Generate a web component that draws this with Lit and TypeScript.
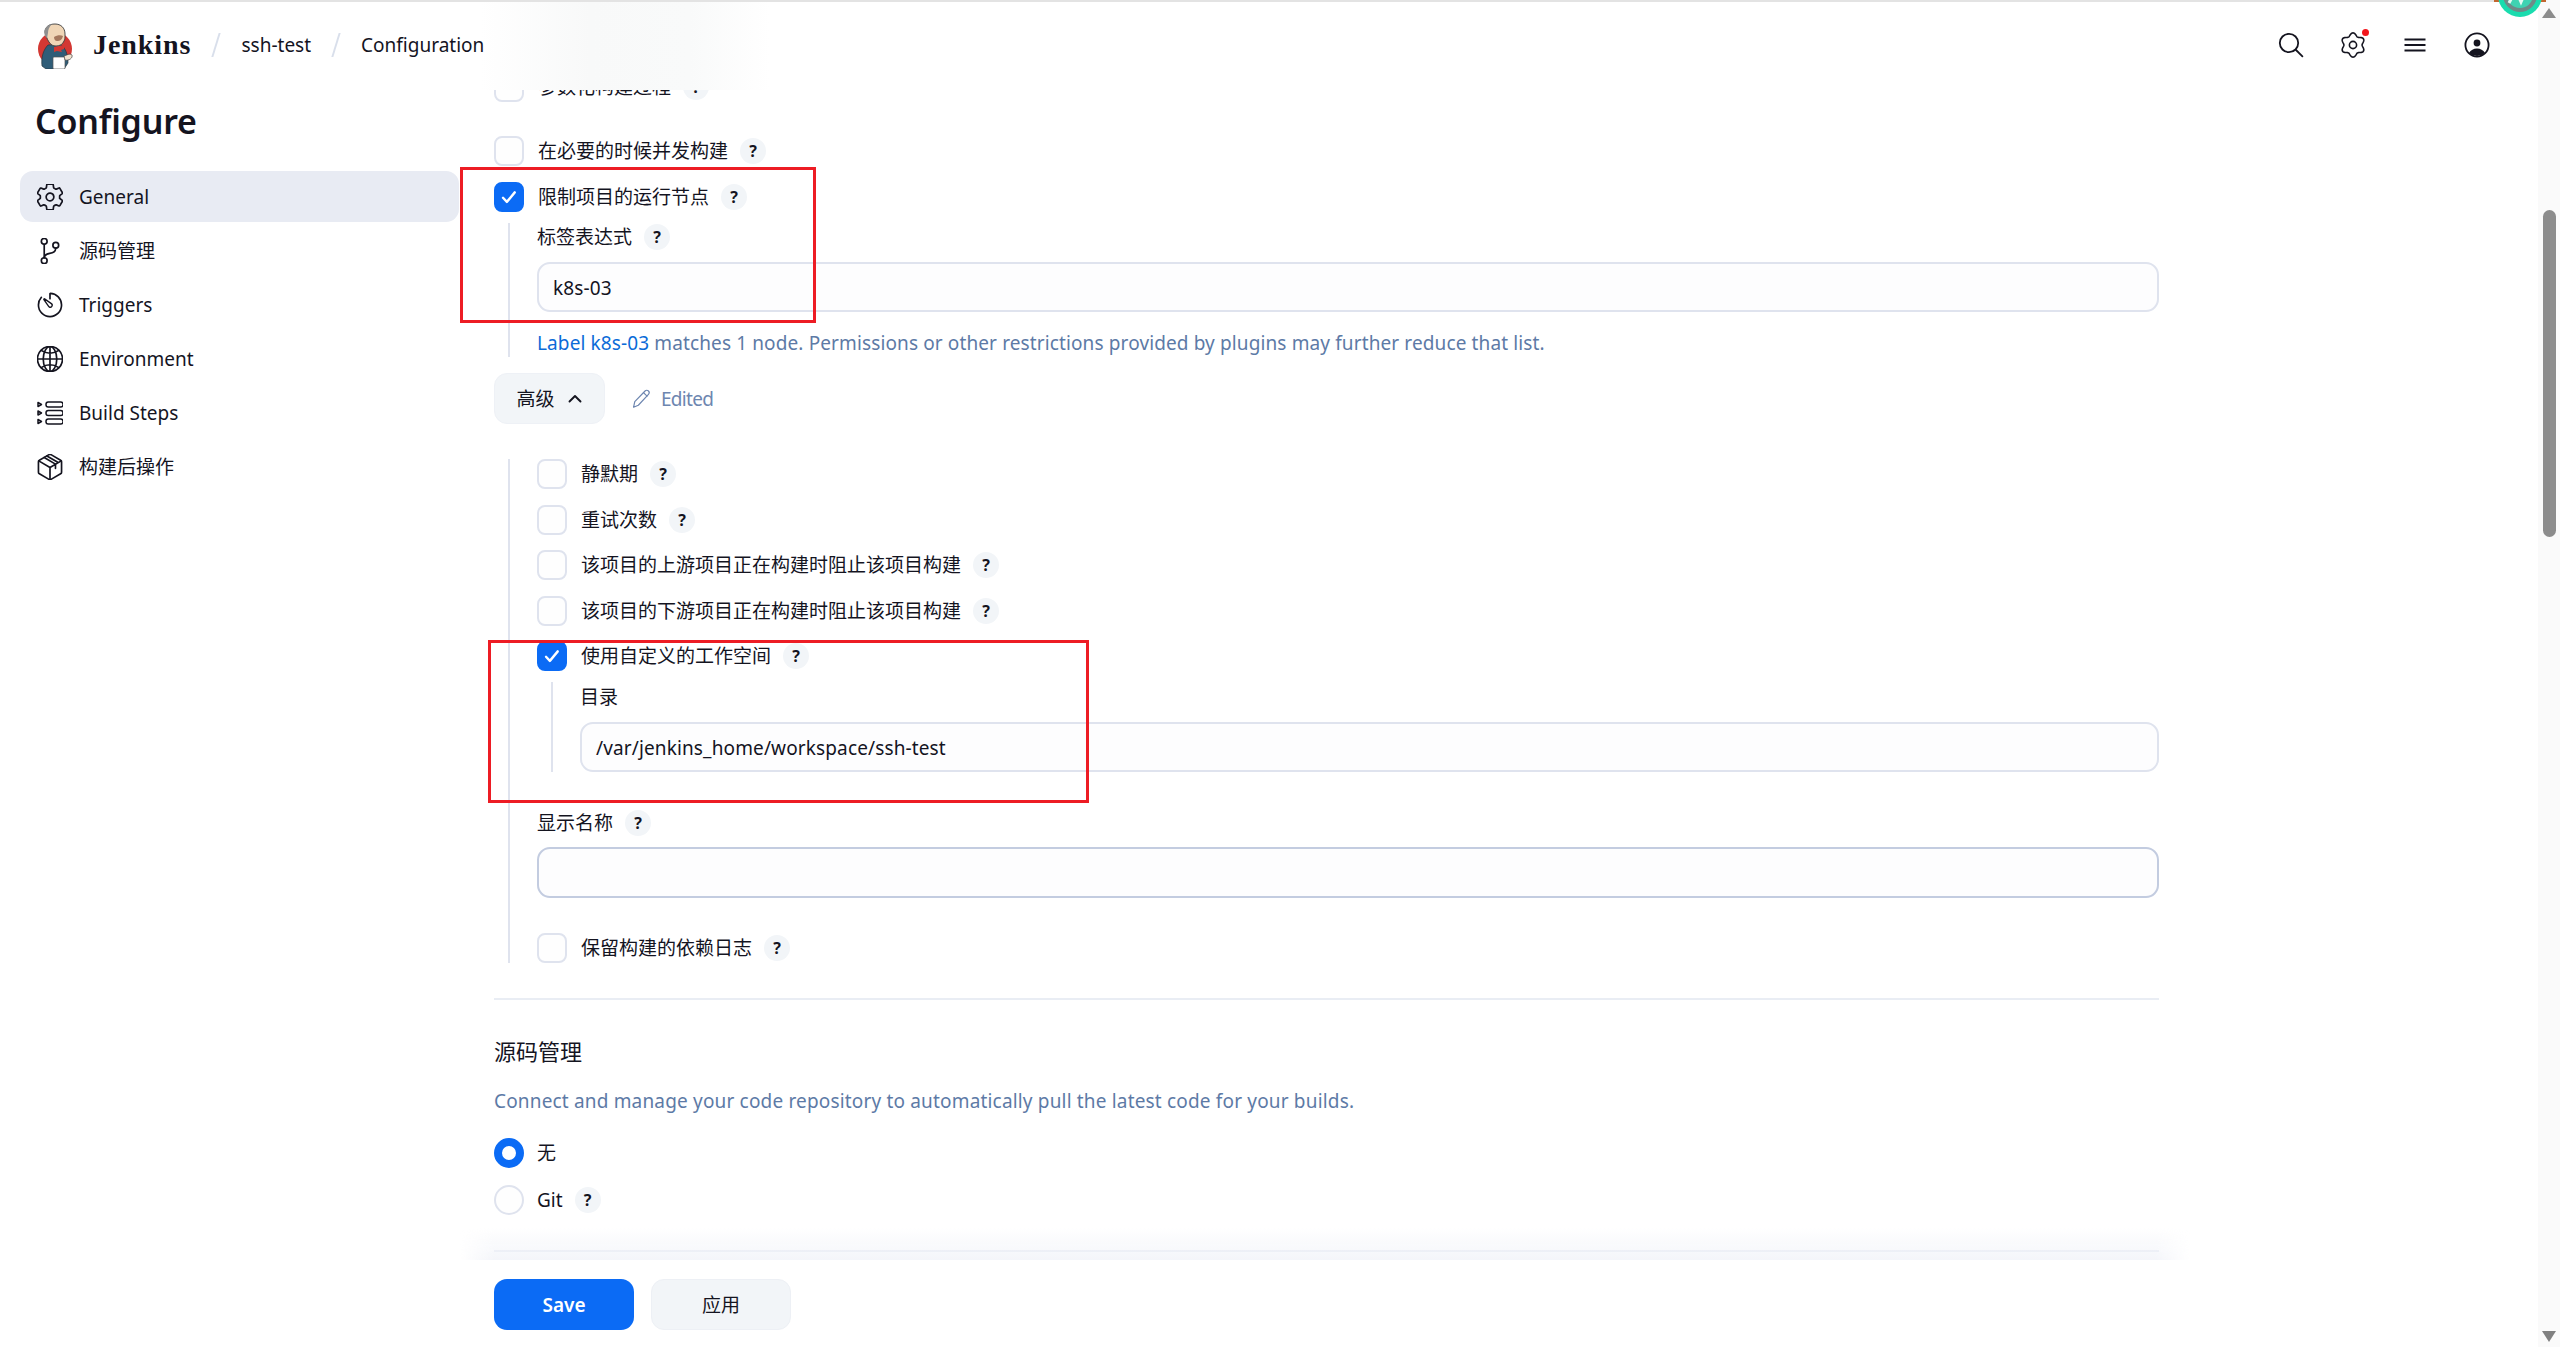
import { LitElement, html, css, svg } from "lit";
import { customElement } from "lit/decorators.js";

const flower = (cx: number, cy: number, r: number, amp: number, lobes: number, rot: number) => {
  const pts: string[] = [];
  for (let i = 0; i < 120; i++) {
    const t = (i / 120) * Math.PI * 2;
    const rr = r + amp * Math.cos(lobes * (t - rot));
    pts.push(`${(cx + rr * Math.cos(t)).toFixed(2)} ${(cy + rr * Math.sin(t)).toFixed(2)}`);
  }
  return "M" + pts.join("L") + "Z";
};

const ion = (body: unknown) => html`<svg class="ic" viewBox="40 40 432 432" fill="none" stroke="currentColor" stroke-width="28" stroke-linecap="round" stroke-linejoin="round">${body}</svg>`;

const gearPath = "M262.29 192.31a64 64 0 1057.4 57.4 64.13 64.13 0 00-57.4-57.4zM416.39 256a154.34 154.34 0 01-1.53 20.79l45.21 35.46a10.81 10.81 0 012.45 13.75l-42.77 74a10.81 10.81 0 01-13.14 4.59l-44.9-18.08a16.11 16.11 0 00-15.17 1.75A164.48 164.48 0 01325 400.8a15.94 15.94 0 00-8.82 12.14l-6.73 47.89a11.08 11.08 0 01-10.68 9.17h-85.54a11.11 11.11 0 01-10.69-8.87l-6.72-47.82a16.07 16.07 0 00-9-12.22 155.3 155.3 0 01-21.46-12.57 16 16 0 00-15.11-1.71l-44.89 18.07a10.81 10.81 0 01-13.14-4.58l-42.77-74a10.8 10.8 0 012.45-13.75l38.21-30a16.05 16.05 0 006-14.08c-.36-4.17-.58-8.33-.58-12.5s.21-8.27.58-12.35a16 16 0 00-6.07-13.94l-38.19-30A10.81 10.81 0 0149.48 186l42.77-74a10.81 10.81 0 0113.14-4.59l44.9 18.08a16.11 16.11 0 0015.17-1.75A164.48 164.48 0 01187 111.2a15.94 15.94 0 008.82-12.14l6.73-47.89A11.08 11.08 0 01213.23 42h85.54a11.11 11.11 0 0110.69 8.87l6.72 47.82a16.07 16.07 0 009 12.22 155.3 155.3 0 0121.46 12.57 16 16 0 0015.11 1.71l44.89-18.07a10.81 10.81 0 0113.14 4.58l42.77 74a10.8 10.8 0 01-2.45 13.75l-38.21 30a16.05 16.05 0 00-6.05 14.08c.33 4.14.55 8.3.55 12.47z";

const icons = {
  gear: ion(svg`<path d=${gearPath}/>`),
  branch: ion(svg`<circle cx="160" cy="96" r="48"/><circle cx="160" cy="416" r="48"/><path d="M160 368V144"/><circle cx="352" cy="160" r="48"/><path d="M352 208c0 128-192 48-192 160"/>`),
  timer: ion(svg`<path d="M112.91 128A191.85 191.85 0 0064 254c-1.18 106.35 85.65 193.8 192 194 106.2.2 192-85.83 192-192 0-104.54-83.55-189.61-187.5-192a4.36 4.36 0 00-4.5 4.37V152"/><path stroke-width="22" d="M233.38 278.63l-79-113a8.13 8.13 0 0111.32-11.32l113 79a32.5 32.5 0 01-37.25 53.26 33.21 33.21 0 01-8.07-7.94z"/>`),
  globe: ion(svg`<path d="M256 48C141.13 48 48 141.13 48 256s93.13 208 208 208 208-93.13 208-208S370.87 48 256 48z"/><path d="M256 48c-58.07 0-112.67 92.43-112.67 208S197.93 464 256 464s112.67-92.43 112.67-208S314.07 48 256 48z"/><path d="M117.33 117.33c38.24 27.15 86.38 43.34 138.67 43.34s100.43-16.19 138.67-43.34M394.67 394.67c-38.24-27.15-86.38-43.34-138.67-43.34s-100.43 16.19-138.67 43.34M256 48v416M464 256H48"/>`),
  steps: html`<svg class="ic" viewBox="0 0 26 26" fill="none" stroke="currentColor" stroke-width="1.5" stroke-linejoin="round"><path d="M1 2.500l3.500 2-3.500 2zM1 11l3.500 2-3.500 2zM1 19.500l3.500 2-3.500 2z"/><rect x="9" y="2" width="17" height="5" rx="2.3"/><rect x="9" y="10.500" width="17" height="5" rx="2.3"/><rect x="9" y="19" width="17" height="5" rx="2.3"/></svg>`,
  cube: ion(svg`<path d="M448 341.37V170.61A32 32 0 00432.11 143l-152-88.46a47.94 47.94 0 00-48.24 0L79.89 143A32 32 0 0064 170.61v170.76A32 32 0 0079.89 369l152 88.46a48 48 0 0048.24 0l152-88.46A32 32 0 00448 341.37z"/><path d="M69 153.99l187 110 187-110M256 463.99v-200M160 98l187 110v70M205 72l187 110"/>`),
};

const nav: [string, unknown][] = [
  ["General", icons.gear],
  ["源码管理", icons.branch],
  ["Triggers", icons.timer],
  ["Environment", icons.globe],
  ["Build Steps", icons.steps],
  ["构建后操作", icons.cube],
];

const help = html`<span class="help">?</span>`;

const check = (label: string, on = false, showHelp = true) => html`
  <div class="row">
    <span class="box ${on ? "on" : ""}">
      ${on ? html`<svg viewBox="0 0 16 16" fill="none" stroke="#fff" stroke-width="1.9" stroke-linecap="round" stroke-linejoin="round"><path d="M3.200 8.600l3.100 3.300 6.300-7.600"/></svg>` : ""}
    </span>
    <span class="lab">${label}</span>${showHelp ? help : ""}
  </div>`;

@customElement("app-root")
export class AppRoot extends LitElement {
  static styles = css`
    :host {
      display: grid;
      grid-template-columns: 1fr 22px;
      height: 100vh;
      overflow: hidden;
      position: relative;
      background: #fff;
      color: #14141f;
      font: 19px/26px "Noto Sans", "Noto Sans CJK SC", sans-serif;
      --blue: #0b6bf5;
      --line: #dfe3ee;
    }
    * { box-sizing: border-box; }
    .page { display: flex; flex-direction: column; min-width: 0; height: 100vh; }

    /* header */
    .top {
      height: 90px; flex: none; display: flex; align-items: center; padding: 0 0 2px 37px; border-top: 2px solid #e3e3e3;
      background: linear-gradient(to right, #fff 480px, #f8f9f9 590px, #f9fafa 690px, #fff 770px);
    }
    .logo { width: 36px; height: 47px; flex: none; }
    .brand { font: 700 28px/30px "Liberation Serif", serif; margin-left: 20px; letter-spacing: .95px; }
    .sep { width: 2px; height: 24px; background: #d9dfeb; transform: skewX(-17deg); margin: 0 24px 0 24px; flex: none; }
    .crumb { white-space: nowrap; }
    .tools { margin-left: auto; display: flex; gap: 36px; align-items: center; padding-right: 48px; }
    .tool { width: 26px; height: 26px; display: block; position: relative; }
    .tool svg { display: block; width: 26px; height: 26px; }
    .dot { position: absolute; right: -3px; top: -3px; width: 7px; height: 7px; background: #f2161c; border-radius: 50%; }

    /* body */
    .body { flex: 1; min-height: 0; display: grid; grid-template-columns: 460px 1730px 1fr; }
    .side { padding: 11px 1px 0 20px; }
    h1 { margin: 0 0 30px 15px; font-size: 34px; line-height: 40px; font-weight: 600; letter-spacing: -.2px; }
    .nav { display: flex; flex-direction: column; gap: 3.600px; }
    .item { height: 50.500px; display: flex; align-items: center; gap: 16px; padding-left: 17px; border-radius: 13px; padding-top: 1px; }
    .item.active { background: #e8ebf3; }
    .ic { width: 26px; height: 26px; flex: none; display: block; }

    .main { display: flex; flex-direction: column; min-height: 0; min-width: 0; }
    .scroll { flex: 1; min-height: 0; overflow: hidden; padding: 0 31px 0 34px; position: relative; }
    .scroll::after {
      content: ""; position: absolute; left: 0; right: 0; bottom: 0; height: 32px;
      background: linear-gradient(to bottom, rgba(240,242,248,0), rgba(240,242,248,.75));
      -webkit-mask-image: linear-gradient(to right, transparent, #000 34px, #000 calc(100% - 34px), transparent);
      mask-image: linear-gradient(to right, transparent, #000 34px, #000 calc(100% - 34px), transparent);
    }
    .content { margin-top: -18px; display: flex; flex-direction: column; }
    .row { display: flex; align-items: center; height: 30px; flex: none; }
    .box { width: 30px; height: 30px; flex: none; border: 2px solid var(--line); border-radius: 8px; background: #fefefe; display: flex; align-items: center; justify-content: center; margin-right: 14px; }
    .box.on { background: var(--blue); border-color: var(--blue); }
    .box svg { width: 20px; height: 20px; }
    .lab { white-space: nowrap; }
    .help { width: 26px; height: 26px; flex: none; margin-left: 12px; border-radius: 50%; background: #f2f5f8; font-size: 16px; font-weight: 700; line-height: 26px; text-align: center; }

    .mt34 { margin-top: 34px; }
    .mt16 { margin-top: 16px; }
    .mt17 { margin-top: 17px; }
    .nest { margin: 11px 0 0 14px; border-left: 2px solid var(--line); padding-left: 27px; display: flex; flex-direction: column; }
    .flabel { display: flex; align-items: center; height: 26px; position: relative; top: 1px; }
    .flabel .help { margin-left: 12px; }
    .input { height: 50px; margin-top: 13px; border: 2px solid var(--line); border-radius: 13px; background: #fdfdfe; padding: 2px 14px 0; display: flex; align-items: center; letter-spacing: .13px; }
    .hint { margin-top: 18px; height: 27px; line-height: 27px; color: #5d7aa6; white-space: nowrap; letter-spacing: .12px; }
    .hint a { color: #0b6bd8; text-decoration: none; }

    .adv { display: flex; align-items: center; margin-top: 16px; height: 51px; }
    .advbtn { width: 111px; height: 51px; background: #f2f5f8; border: 1px solid #eef1f6; border-radius: 13px; display: flex; align-items: center; justify-content: center; gap: 12px; }
    .advbtn svg { width: 16px; height: 16px; }
    .edited { margin-left: 27px; display: flex; align-items: center; gap: 10px; color: #6d86b0; letter-spacing: -.7px; }
    .edited svg { width: 19px; height: 19px; }

    .block2 { margin: 35px 0 0 14px; border-left: 2px solid var(--line); padding-left: 27px; display: flex; flex-direction: column; }
    .rows { display: flex; flex-direction: column; gap: 15.500px; }
    .nest2 { margin: 11px 0 0 14px; border-left: 2px solid var(--line); padding-left: 27px; display: flex; flex-direction: column; }
    .nest2 .flabel { margin-top: 1px; }
    .mt37 { margin-top: 37px; }
    .dark { height: 51px; margin-top: 12px; border-color: #c3cce0; }
    .mt35 { margin-top: 35px; }

    .hr { height: 2px; background: #e9edf4; flex: none; }
    h2 { margin: 36px 0 0; font-size: 22px; line-height: 30px; font-weight: 400; }
    .desc { margin-top: 20px; height: 30px; line-height: 30px; color: #5d7aa6; white-space: nowrap; letter-spacing: .17px; }
    .radio { width: 30px; height: 30px; flex: none; border-radius: 50%; border: 2px solid var(--line); background: #fefefe; margin-right: 13px; }
    .radio.on { border: 8px solid var(--blue); background: #fff; }
    .mt22 { margin-top: 22px; }

    .bar { height: 87px; flex: none; padding: 19px 0 0 34px; display: flex; gap: 17px; background: #fff; }
    .btn { width: 140px; height: 51px; border-radius: 13px; display: flex; align-items: center; justify-content: center; }
    .save { background: var(--blue); color: #fff; font-weight: 600; }
    .apply { background: #f2f5f8; border: 1px solid #edf0f5; }

    /* scrollbar */
    .sb { background: #fafafa; position: relative; height: 100vh; }
    .sb .up { position: absolute; left: 4px; top: 8px; width: 0; height: 0; border: 7px solid transparent; border-top: 0; border-bottom: 10px solid #8c8c8c; }
    .sb .down { position: absolute; left: 4px; bottom: 5px; width: 0; height: 0; border: 7px solid transparent; border-bottom: 0; border-top: 11px solid #808080; }
    .sb .thumb { position: absolute; left: 5px; top: 210px; width: 13px; height: 327px; background: #8c8c8c; border-radius: 7px; }

    /* overlays */
    .ann { position: absolute; border: 3px solid #ed1c24; pointer-events: none; }
    .a1 { left: 460px; top: 167px; width: 356px; height: 156px; }
    .a2 { left: 488px; top: 640px; width: 601px; height: 163px; }
    .badge { position: absolute; left: 2498px; top: -27px; width: 44px; height: 44px; border-radius: 50%; background: #19dcae; display: flex; align-items: center; justify-content: center; }
    .badge svg { width: 36px; height: 36px; }
    .edge { position: absolute; left: 2494px; top: 0; width: 52px; height: 2px; background: #c2672f; }
  `;

  render() {
    return html`
      <div class="page">
        <header class="top">
          <svg class="logo" viewBox="0 0 36 47">
            <circle cx="18" cy="27" r="17" fill="#d33833"/>
            <path d="M5 44c-1-8 1-16 6-21l12-1c6 4 8 11 8 19l-4 6H9z" fill="#2f5d78" stroke="#24353f" stroke-width=".7"/>
            <path d="M8 10C8 5 12 2 18 2c6 0 10 4 10 10 0 3 0 6-1 7-1 3-4 5-8 5-3 0-5-1-7-4-2-3-3-6-4-10z" fill="#f0d6b7" stroke="#3b3b3b" stroke-width=".9"/>
            <path d="M8 14C6 8 9 3 15 2c-3 3-4 6-4 9l-1 5z" fill="#8f8f8f"/>
            <path d="M17 15c3-2 7-2 9-1-1 4-3 5-6 5-2 0-3-2-3-4z" fill="#a5785e"/>
            <path d="M17 25l5-1 5-1 0 4-3 1 1 2-5-1-3 1z" fill="#d33833"/>
            <rect x="16" y="35" width="12" height="12" rx="1" fill="#fff" stroke="#555" stroke-width=".7"/>
            <path d="M27 34c3-1 6-3 8-1 1 3-3 6-7 5z" fill="#f0e2cf" stroke="#444" stroke-width=".7"/>
          </svg>
          <span class="brand">Jenkins</span>
          <span class="sep"></span>
          <span class="crumb">ssh-test</span>
          <span class="sep"></span>
          <span class="crumb">Configuration</span>
          <div class="tools">
            <span class="tool"><svg viewBox="0 0 26 26" fill="none" stroke="#14141f" stroke-width="1.8" stroke-linecap="round"><circle cx="11" cy="11" r="9.200"/><path d="M18 18l6.400 6.400"/></svg></span>
            <span class="tool"><svg viewBox="0 0 26 26" fill="none" stroke="#14141f" stroke-width="1.600"><path d=${flower(13, 13, 10.6, 1.5, 6, Math.PI / 2)}/><circle cx="13" cy="13" r="3.600"/></svg><i class="dot"></i></span>
            <span class="tool"><svg viewBox="0 0 26 26" fill="none" stroke="#14141f" stroke-width="1.800"><path d="M2.500 7.500h21M2.500 13h21M2.500 18.500h21"/></svg></span>
            <span class="tool"><svg viewBox="0 0 26 26"><circle cx="13" cy="13" r="11.600" fill="none" stroke="#14141f" stroke-width="1.800"/><circle cx="13" cy="11" r="3.400" fill="#14141f"/><path d="M5 21c1.800-3 4.500-4.600 8-4.600s6.200 1.600 8 4.600a12 12 0 01-16 0z" fill="#14141f"/></svg></span>
          </div>
        </header>
        <div class="body">
          <aside class="side">
            <h1>Configure</h1>
            <nav class="nav">
              ${nav.map(([t, i], n) => html`<div class="item ${n === 0 ? "active" : ""}">${i}<span>${t}</span></div>`)}
            </nav>
          </aside>
          <main class="main">
            <div class="scroll">
              <div class="content">
                ${check("参数化构建过程")}
                <div class="mt34">${check("在必要的时候并发构建")}</div>
                <div class="mt16">${check("限制项目的运行节点", true)}</div>
                <div class="nest">
                  <div class="flabel"><span>标签表达式</span>${help}</div>
                  <div class="input">k8s-03</div>
                  <div class="hint"><a>Label k8s-03</a> matches 1 node. Permissions or other restrictions provided by plugins may further reduce that list.</div>
                </div>
                <div class="adv">
                  <div class="advbtn"><span>高级</span><svg viewBox="0 0 16 16" fill="none" stroke="#14141f" stroke-width="1.9" stroke-linecap="round" stroke-linejoin="round"><path d="M2.500 10.500L8 5l5.500 5.500"/></svg></div>
                  <div class="edited"><svg viewBox="0 0 24 24" fill="none" stroke="currentColor" stroke-width="1.500" stroke-linecap="round" stroke-linejoin="round"><path d="M2 23l1.500-7L16.500 2.500a3 3 0 014.300 0 3 3 0 010 4.200L8 20.500z"/><path d="M14.500 4.500l4.500 4.500"/></svg><span>Edited</span></div>
                </div>
                <div class="block2">
                  <div class="rows">
                    ${check("静默期")}
                    ${check("重试次数")}
                    ${check("该项目的上游项目正在构建时阻止该项目构建")}
                    ${check("该项目的下游项目正在构建时阻止该项目构建")}
                    ${check("使用自定义的工作空间", true)}
                  </div>
                  <div class="nest2">
                    <div class="flabel"><span>目录</span></div>
                    <div class="input">/var/jenkins_home/workspace/ssh-test</div>
                  </div>
                  <div class="flabel mt37"><span>显示名称</span>${help}</div>
                  <div class="input dark"></div>
                  <div class="mt35">${check("保留构建的依赖日志")}</div>
                </div>
                <div class="hr mt35"></div>
                <h2>源码管理</h2>
                <div class="desc">Connect and manage your code repository to automatically pull the latest code for your builds.</div>
                <div class="row mt22"><span class="radio on"></span><span class="lab">无</span></div>
                <div class="row mt17"><span class="radio"></span><span class="lab">Git</span>${help}</div>
                <div class="hr mt35"></div>
              </div>
            </div>
            <div class="bar">
              <div class="btn save">Save</div>
              <div class="btn apply">应用</div>
            </div>
          </main>
          <div></div>
        </div>
      </div>
      <div class="sb"><i class="up"></i><i class="thumb"></i><i class="down"></i></div>

      <div class="ann a1"></div>
      <div class="ann a2"></div>
      <div class="edge"></div>
      <div class="badge"><svg viewBox="0 0 36 36"><circle cx="18" cy="18" r="17" fill="#6e8b88"/><circle cx="18" cy="18" r="13" fill="#3fd3b2"/><path d="M7 26L14 13l5 12 6-14" fill="none" stroke="#e6fbf5" stroke-width="3"/></svg></div>
    `;
  }
}
